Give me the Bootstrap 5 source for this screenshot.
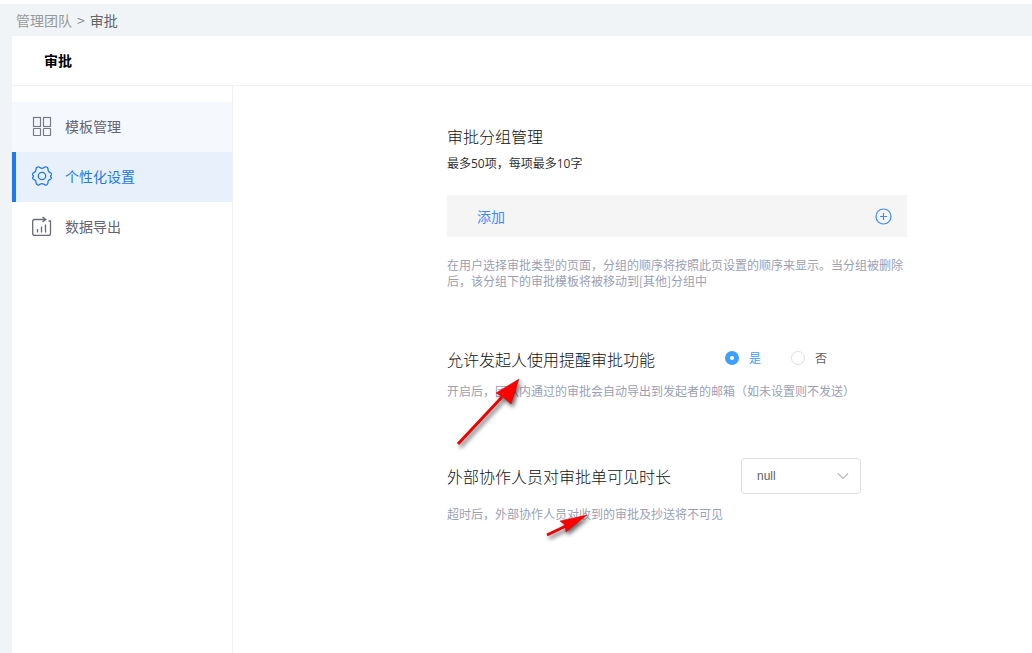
<!DOCTYPE html>
<html lang="zh-CN">
<head>
<meta charset="utf-8">
<meta name="viewport" content="width=device-width, initial-scale=1">
<title>审批</title>
<link rel="stylesheet" href="https://cdn.jsdelivr.net/npm/bootstrap@5.3.0/dist/css/bootstrap.min.css">
<script src="https://cdn.jsdelivr.net/npm/bootstrap@5.3.0/dist/js/bootstrap.bundle.min.js"></script>
<style>
  body { font-family: "Noto Sans CJK SC", "Noto Sans", sans-serif; font-size: 14px; line-height: 20px; color: #303133; background: #f0f4f7; border-top: 4px solid #fff; }
  .crumbs { height: 32px; padding-left: 16px; --bs-breadcrumb-divider: ">"; --bs-breadcrumb-item-padding-x: 5px; --bs-breadcrumb-divider-color: #888; --bs-breadcrumb-item-active-color: #666; }
  .crumbs a { color: #999; }
  .panel { margin-left: 12px; }
  .panel-head { height: 50px; padding: 0 0 2px 32px; border-bottom: 1px solid #f2f2f4; }
  .panel-head h1 { font-size: 14px; line-height: 20px; color: #000; }
  .side { width: 221px; padding-top: 16px; border-right: 1px solid #f0f1f3; }
  .side .nav-link { height: 50px; padding: 0 0 2px 20px; gap: 13px; color: #636473; }
  .side .nav-link:first-child { background: #f5f9fe; }
  .side .nav-link.active { background: #e8f0fc; color: #1f78f0; padding-left: 16px; border-left: 4px solid #1f78f0; }
  .content { padding: 38px 24px 24px 214px; }
  .settings { max-width: 460px; }
  h2 { font-size: 16px; line-height: 24px; font-weight: 300; color: #111; margin: 0; white-space: nowrap; }
  .hint { font-size: 12px; line-height: 16px; color: #9c9fb3; margin: 12px 0 0; }
  .limit { font-family: "Open Sans", "Noto Sans CJK SC", sans-serif; font-size: 12px; line-height: 16px; margin: 8px 0 23px; }
  .add-row { height: 42px; padding: 0 15px 0 30px; border-radius: 0; background: #f5f5f5; color: #3d8bff; font-size: 14px; }
  .add-row:hover { background: #f5f5f5; color: #3d8bff; }
  .add-row + .hint { margin-top: 20px; }
  .choices { padding: 0 0 2px 70px; gap: 30px; font-size: 12px; }
  .choices label { margin-left: 10px; color: #606266; }
  .choices .form-check-input { width: 14px; height: 14px; margin: 0; border-color: #dcdfe6; background-image: none; }
  .choices .form-check-input:checked { background: #fff; border: 5px solid #409eff; }
  .choices .form-check-input:checked + label { color: #409eff; }
  .duration { width: 120px; height: 36px; margin-left: 70px; padding: 0 32px 0 15px; border-color: #dcdfe6; border-radius: 4px; color: #606266; font: 12px "Liberation Sans", sans-serif;
    background-image: url("data:image/svg+xml,%3Csvg xmlns='http://www.w3.org/2000/svg' viewBox='0 0 12 8'%3E%3Cpath d='M1 1.5 6 6.5 11 1.5' fill='none' stroke='%23b4b8c0' stroke-width='1.2'/%3E%3C/svg%3E"); background-size: 12px 8px; background-position: right 11px center; }
  .remind { margin-top: 58px; }
  .visible-time { margin-top: 59px; }
  .pointer { position: absolute; overflow: visible; pointer-events: none; filter: drop-shadow(2px 3px 2px rgba(0,0,0,.6)); }
  .remind .pointer { left: 10px; top: 31px; }
  .visible-time .pointer { left: 99px; top: 55px; }
</style>
</head>
<body class="d-flex flex-column min-vh-100">
  <nav aria-label="breadcrumb">
    <ol class="crumbs breadcrumb align-items-center mb-0">
      <li class="breadcrumb-item"><a class="text-decoration-none" href="#">管理团队</a></li>
      <li class="breadcrumb-item active" aria-current="page">审批</li>
    </ol>
  </nav>
  <div class="panel bg-white flex-grow-1 d-flex flex-column">
    <header class="panel-head d-flex align-items-center"><h1 class="fw-bold m-0">审批</h1></header>
    <div class="d-flex flex-grow-1">
      <nav class="side nav flex-column flex-nowrap flex-shrink-0">
        <a class="nav-link d-flex align-items-center" href="#">
          <svg width="20" height="20" fill="none" stroke="#777985" stroke-width="1.2" aria-hidden="true"><rect x="1.5" y="1.5" width="7" height="9"/><rect x="11.5" y="1.5" width="7" height="9"/><rect x="1.5" y="12.5" width="7" height="7" rx=".5"/><rect x="11.5" y="12.5" width="7" height="7" rx=".5"/></svg>
          模板管理
        </a>
        <a class="nav-link active d-flex align-items-center" href="#" aria-current="page">
          <svg width="20" height="20" fill="none" stroke="#1f78f0" stroke-width="1.3" stroke-linejoin="round" aria-hidden="true"><circle cx="10" cy="10" r="3.7"/><path d="M5.3 1.2Q6.8.4 8 1.6Q10 3.1 12 1.6Q13.200.4 14.700 1.200Q16.200 1.900 16 3.500Q15.900 5.900 18.200 6.500Q19.800 7.300 19.400 9Q17.500 10 19.400 11.500Q19.500 13.200 17.800 13.700Q15.700 14.300 16 16.600Q16 18.300 14.500 18.900Q13.200 19.400 12 18.200Q10 16.900 8 18.200Q6.800 19.400 5.500 18.900Q4 18.300 4 16.600Q4.300 14.300 2.200 13.700Q.5 13.200.6 11.500Q2.500 10 .6 9Q.2 7.300 1.800 6.500Q4.100 5.900 4 3.500Q3.800 1.900 5.300 1.200Z"/></svg>
          个性化设置
        </a>
        <a class="nav-link d-flex align-items-center" href="#">
          <svg width="20" height="20" fill="none" stroke="#686a79" stroke-width="1.3" aria-hidden="true"><path d="M16.500 5H18.500V17.500Q18.500 19.500 16.500 19.500H2.500Q.7 19.500.7 17.500V5.500Q.7 3.500 2.700 3.500H13.500M10.500 1 13.800 3.500 10.500 6"/><path d="M5.500 13V16.500M9.500 10.500V16.500M13.500 8.500V16.500"/></svg>
          数据导出
        </a>
      </nav>
      <main class="content flex-grow-1">
        <div class="settings">
          <section>
            <h2>审批分组管理</h2>
            <p class="limit">最多50项，每项最多10字</p>
            <button type="button" class="add-row btn border-0 w-100 d-flex justify-content-between align-items-center">
              添加
              <svg width="17" height="17" fill="none" stroke="#3d8bff" aria-hidden="true"><circle cx="8.500" cy="8.500" r="7.500" stroke-width="1.200"/><path d="M5 8.500H12M8.500 5V12" stroke-width="1.200"/></svg>
            </button>
            <p class="hint">在用户选择审批类型的页面，分组的顺序将按照此页设置的顺序来显示。当分组被删除后，该分组下的审批模板将被移动到[其他]分组中</p>
          </section>
          <section class="remind position-relative">
            <div class="d-flex align-items-center">
              <h2 id="remind-title">允许发起人使用提醒审批功能</h2>
              <div class="choices d-flex" role="radiogroup" aria-labelledby="remind-title">
                <div class="d-flex align-items-center"><input class="form-check-input" type="radio" name="remind" id="yes" checked><label for="yes">是</label></div>
                <div class="d-flex align-items-center"><input class="form-check-input" type="radio" name="remind" id="no"><label for="no">否</label></div>
              </div>
            </div>
            <p class="hint">开启后，团队内通过的审批会自动导出到发起者的邮箱（如未设置则不发送）</p>
            <svg class="pointer" width="64" height="68" aria-hidden="true"><path d="M1 66 45 19" stroke="#e00" stroke-width="3"/><path d="M62 1 39 15 46 19 54 26Z" fill="red" stroke="#c00" stroke-width=".5"/></svg>
          </section>
          <section class="visible-time position-relative">
            <div class="d-flex align-items-center">
              <h2><label for="duration">外部协作人员对审批单可见时长</label></h2>
              <select class="duration form-select" id="duration"><option>null</option></select>
            </div>
            <p class="hint">超时后，外部协作人员对收到的审批及抄送将不可见</p>
            <svg class="pointer" width="44" height="24" aria-hidden="true"><path d="M1 22 22 12" stroke="#e00" stroke-width="3"/><path d="M41 2 14 8 19 12 20 19Z" fill="red" stroke="#c00" stroke-width=".5"/></svg>
          </section>
        </div>
      </main>
    </div>
  </div>
</body>
</html>
